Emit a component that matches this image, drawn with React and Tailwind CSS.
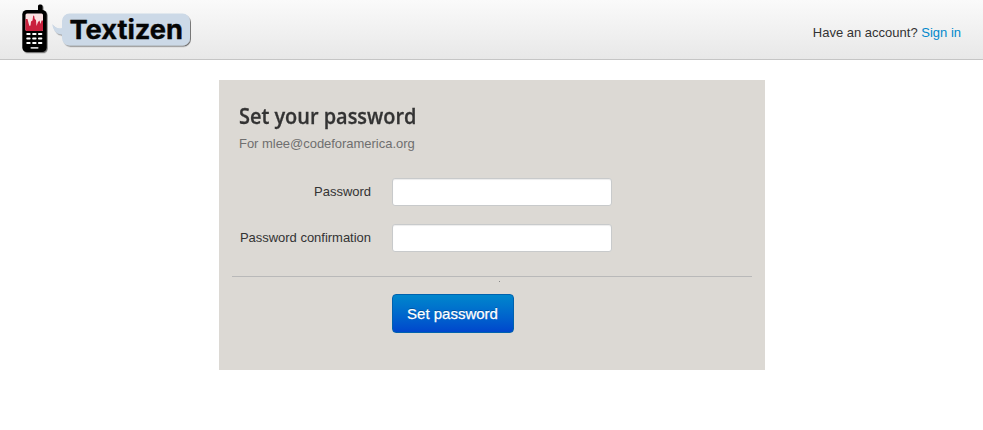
function Logo() {
  return (
    <svg width="180" height="59" viewBox="0 0 180 59" className="block" role="img" aria-label="Textizen">
      <defs>
        <filter id="shadow" x="-20%" y="-20%" width="140%" height="150%">
          <feDropShadow dx="1" dy="1.2" stdDeviation="0.7" floodColor="#000" floodOpacity="0.5" />
        </filter>
        <clipPath id="screen">
          <rect x="11.500" y="13.500" width="17.500" height="17.500" rx="1.5" />
        </clipPath>
      </defs>
      <g filter="url(#shadow)">
        <rect x="24" y="4.500" width="4.500" height="10" rx="1.5" fill="#050505" />
        <rect x="8.300" y="10" width="24.400" height="42" rx="4.500" fill="#050505" />
      </g>
      <g clipPath="url(#screen)">
        <rect x="11" y="13" width="18.500" height="18" fill="#fbe1e2" />
        <path
          d="M11 31V19h2.500l1.300 5 .7 2 1-.5.5-4 1.500-1 .7-5 1 .5.500 3 1.300 1 .5 6 1.500-4 1.500-1.500 1 3.500 1-3.500H29.500V31Z"
          fill="#c9203d"
        />
      </g>
      <g fill="#fff">
        <rect x="12.300" y="33" width="4.300" height="2" rx=".8" />
        <rect x="18.200" y="33" width="4.300" height="2" rx=".8" />
        <rect x="24" y="33" width="4.300" height="2" rx=".8" />
        <rect x="12.300" y="37.500" width="4.300" height="2" rx=".8" />
        <rect x="18.200" y="37.500" width="4.300" height="2" rx=".8" />
        <rect x="24" y="37.500" width="4.300" height="2" rx=".8" />
        <rect x="12.300" y="42" width="4.300" height="2" rx=".8" />
        <rect x="18.200" y="42" width="4.300" height="2" rx=".8" />
        <rect x="24" y="42" width="4.300" height="2" rx=".8" />
        <rect x="16.500" y="47" width="8" height="1.800" rx=".8" fill="#ccc" />
      </g>
      <path
        d="M55.500 13.500H168.500a7.500 7.500 0 0 1 7.500 7.500V38a7.500 7.500 0 0 1-7.500 7.500H55.500a7.500 7.500 0 0 1-7.500-7.500V34.500C43 34.500 39 30.500 38.200 24 40.500 27.200 43.500 28.800 48 28V21a7.500 7.500 0 0 1 7.500-7.500Z"
        fill="#ccd9e7"
        filter="url(#shadow)"
      />
      <text
        x="55.500"
        y="39.300"
        textLength="113.500"
        lengthAdjust="spacingAndGlyphs"
        fill="#050505"
        stroke="#050505"
        strokeWidth=".4"
        className="[font-family:Inter,sans-serif] text-[26px] font-bold"
      >
        Textizen
      </text>
    </svg>
  );
}

function Field({ id, label }) {
  return (
    <div className="flex h-7 items-center">
      <label htmlFor={id} className="w-[152px] whitespace-nowrap text-right text-[13px] tracking-[-0.02px]">
        {label}
      </label>
      <input
        id={id}
        type="password"
        className="ml-[21px] h-7 w-[220px] rounded-[3px] border border-[#c8cacb] bg-white px-1 shadow-[inset_0_1px_1px_rgba(0,0,0,0.075)] outline-none"
      />
    </div>
  );
}

export default function App() {
  return (
    <div className="min-h-[430px] bg-white font-['Liberation_Sans',sans-serif] text-[13px] text-[#333]">
      <header className="flex h-[60px] justify-between border-b border-[#c5c5c5] bg-linear-to-b from-[#fafafa] to-[#e8e8e8] pl-[14px] pr-[22px]">
        <Logo />
        <p className="pt-[24px] leading-[18px]">
          Have an account?{" "}
          <a href="#" className="text-[#0088cc]">
            Sign in
          </a>
        </p>
      </header>

      <main className="ml-[219px] mt-5 h-[290px] w-[546px] bg-[#dcd9d4] pt-5">
        <h1 className="ml-5 w-max origin-left scale-x-[0.905] font-['Open_Sans',sans-serif] text-[22px] font-semibold leading-[30px] [-webkit-text-stroke:0.3px_#333]">
          Set your password
        </h1>
        <p className="ml-5 mt-[5px] leading-[18px] tracking-[-0.03px] text-[#6f6f6f]">For mlee@codeforamerica.org</p>

        <form className="mt-[25px]">
          <div className="flex flex-col gap-[18px]">
            <Field id="password" label="Password" />
            <Field id="confirmation" label="Password confirmation" />
          </div>
          <div className="mx-[13px] mt-6 h-[18px] border-t border-[#b9b9b9] pl-[267px] pt-1">
            <div className="size-px bg-[#888]" />
          </div>
          <button
            type="button"
            className="ml-[173px] flex h-[39px] w-[122px] items-center justify-center rounded-[4px] border border-[#0062ae] bg-linear-to-b from-[#0088cc] to-[#0044cc] bg-origin-border pr-px pt-px text-[15px] text-white [text-shadow:0_-1px_0_rgba(0,0,0,0.25)] [-webkit-text-stroke:0.25px_white]"
          >
            Set password
          </button>
        </form>
      </main>
    </div>
  );
}
